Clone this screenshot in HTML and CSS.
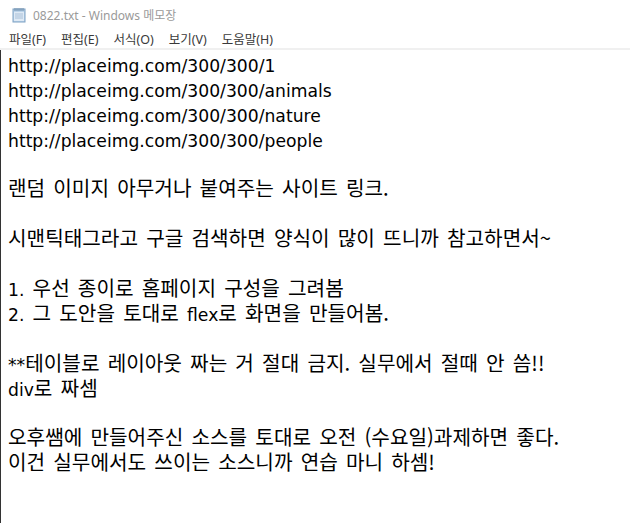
FILE: index.html
```html
<!DOCTYPE html>
<html lang="ko">
<head>
<meta charset="utf-8">
<title>0822.txt - Windows 메모장</title>
<link rel="stylesheet" href="styles.css">
</head>
<body>
<div class="window">
  <div class="titlebar">
    <svg class="icon" width="16" height="16" viewBox="0 0 16 16">
      <rect x="2" y="2" width="12" height="13" fill="#bcd4ea" stroke="#7fa2c4" stroke-width="1"/>
      <rect x="3" y="5" width="10" height="9" fill="#dfeaf5"/>
      <path d="M4 1v3M6 1v3M8 1v3M10 1v3M12 1v3" stroke="#6b8aa8" stroke-width="1"/>
      <path d="M4 7h8M4 9h8M4 11h8" stroke="#a9c0d8" stroke-width="1"/>
    </svg>
    <span class="title">0822.txt - Windows 메모장</span>
  </div>
  <div class="menubar">
    <span class="menu">파일(F)</span>
    <span class="menu">편집(E)</span>
    <span class="menu">서식(O)</span>
    <span class="menu">보기(V)</span>
    <span class="menu">도움말(H)</span>
  </div>
  <div class="editor">
    <div class="line"><span class="lat">http://placeimg.com/300/300/1</span></div>
    <div class="line"><span class="lat">http://placeimg.com/300/300/animals</span></div>
    <div class="line"><span class="lat">http://placeimg.com/300/300/nature</span></div>
    <div class="line"><span class="lat">http://placeimg.com/300/300/people</span></div>
    <div class="line"></div>
    <div class="line">랜덤 이미지 아무거나 붙여주는 사이트 링크.</div>
    <div class="line"></div>
    <div class="line">시맨틱태그라고 구글 검색하면 양식이 많이 뜨니까 참고하면서~</div>
    <div class="line"></div>
    <div class="line"><span class="lat">1.</span> 우선 종이로 홈페이지 구성을 그려봄</div>
    <div class="line"><span class="lat">2.</span> 그 도안을 토대로 <span class="lat">flex</span>로 화면을 만들어봄.</div>
    <div class="line"></div>
    <div class="line"><span class="lat">**</span>테이블로 레이아웃 짜는 거 절대 금지. 실무에서 절때 안 씀!!</div>
    <div class="line"><span class="lat">div</span>로 짜셈</div>
    <div class="line"></div>
    <div class="line">오후쌤에 만들어주신 소스를 토대로 오전 (수요일)과제하면 좋다.</div>
    <div class="line">이건 실무에서도 쓰이는 소스니까 연습 마니 하셈!</div>
  </div>
</div>
</body>
</html>
```

FILE: styles.css
```css
html, body {
  margin: 0;
  padding: 0;
  background: #ffffff;
}
.window {
  width: 630px;
  height: 523px;
  display: flex;
  flex-direction: column;
  overflow: hidden;
  font-family: "Noto Sans", "Noto Sans CJK KR", sans-serif;
}
.titlebar {
  height: 29px;
  display: flex;
  align-items: center;
  padding-left: 11px;
  gap: 6px;
  background: #ffffff;
}
.icon {
  flex: none;
}
.title {
  font-size: 12px;
  color: #9a9a9a;
}
.menubar {
  height: 19px;
  display: flex;
  align-items: center;
  padding-left: 9px;
  gap: 15px;
  border-bottom: 2px solid #f0f0f0;
}
.menu {
  font-size: 12.5px;
  color: #3a3a3a;
}
.editor {
  flex: 1;
  border-left: 1px solid #333333;
  padding: 2px 0 0 7px;
  font-family: "Noto Sans CJK KR", sans-serif;
  font-size: 20.2px;
  line-height: 24.9px;
  word-spacing: 2.5px;
  color: #000000;
  background: #ffffff;
}
.line {
  height: 24.9px;
  white-space: pre;
}
.lat {
  font-family: "DejaVu Sans", sans-serif;
  font-size: 17.2px;
  word-spacing: 0;
}
```
